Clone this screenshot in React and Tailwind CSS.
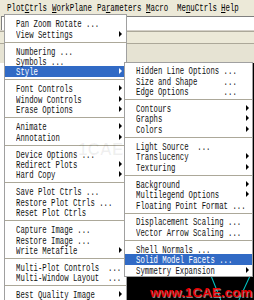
import React from 'react';

const mono = "font-['Liberation_Mono',monospace]";

const mainItems = [
    { label: 'Pan Zoom Rotate ...' },
    { label: 'View Settings', arrow: true },
    { sep: true },
    { label: 'Numbering ...' },
    { label: 'Symbols ...' },
    { label: 'Style', arrow: true, active: true },
    { sep: true },
    { label: 'Font Controls', arrow: true },
    { label: 'Window Controls', arrow: true },
    { label: 'Erase Options', arrow: true },
    { sep: true },
    { label: 'Animate', arrow: true },
    { label: 'Annotation', arrow: true },
    { sep: true },
    { label: 'Device Options ...' },
    { label: 'Redirect Plots', arrow: true },
    { label: 'Hard Copy', arrow: true },
    { sep: true },
    { label: 'Save Plot Ctrls ...' },
    { label: 'Restore Plot Ctrls ...' },
    { label: 'Reset Plot Ctrls' },
    { sep: true },
    { label: 'Capture Image ...' },
    { label: 'Restore Image ...' },
    { label: 'Write Metafile', arrow: true },
    { sep: true },
    { label: 'Multi-Plot Controls  ...' },
    { label: 'Multi-Window Layout  ...' },
    { sep: true },
    { label: 'Best Quality Image', arrow: true },
];

const styleItems = [
    { label: 'Hidden Line Options ...' },
    { label: 'Size and Shape      ...' },
    { label: 'Edge Options        ...' },
    { sep: true },
    { label: 'Contours', arrow: true },
    { label: 'Graphs', arrow: true },
    { label: 'Colors', arrow: true },
    { sep: true },
    { label: 'Light Source  ...' },
    { label: 'Translucency', arrow: true },
    { label: 'Texturing', arrow: true },
    { sep: true },
    { label: 'Background', arrow: true },
    { label: 'Multilegend Options', arrow: true },
    { label: 'Floating Point Format ...' },
    { sep: true },
    { label: 'Displacement Scaling ...' },
    { label: 'Vector Arrow Scaling ...' },
    { sep: true },
    { label: 'Shell Normals ...' },
    { label: 'Solid Model Facets ...', active: true },
    { label: 'Symmetry Expansion', arrow: true },
];

const MenuRows = ({ items, sub }) =>
    items.map((it, i) => {
        if (it.sep) {
            return (
                <div key={i} className="flex h-[6.5px] items-center">
                    <div className="h-px w-full bg-[#aca899]" />
                </div>
            );
        }
        return (
            <div
                key={i}
                className={`flex h-[10.45px] items-center pl-[11px] ${sub ? 'pr-[3px]' : 'pr-[4px]'} ${it.active ? 'bg-[#316ac5] text-white' : 'text-[#111]'}`}
            >
                <div className="min-w-0 flex-1">
                    <span className="inline-block origin-left scale-x-[0.73] whitespace-pre text-[10px] leading-none">
                        {it.label}
                    </span>
                </div>
                {it.arrow && (
                    <span
                        className={`h-0 w-0 border-y-[3px] border-l-[3px] border-y-transparent ${it.active ? 'border-l-white' : 'border-l-black'}`}
                    />
                )}
            </div>
        );
    });

const MenuBarItem = ({ w, children }) => (
    <div className={`${w} shrink-0`}>
        <span className="inline-block origin-left scale-x-[0.74] whitespace-pre text-[10px] leading-none">
            {children}
        </span>
    </div>
);

export default function App() {
    return (
        <div className={`relative h-[300px] w-[254px] overflow-hidden bg-[#ece9d8] text-black ${mono}`}>
            {/* menu bar */}
            <div className="flex h-[14px] items-center pl-[7px]">
                <MenuBarItem w="w-[45px]">Plot<u>C</u>trls</MenuBarItem>
                <MenuBarItem w="w-[45px]"><u>W</u>orkPlane</MenuBarItem>
                <MenuBarItem w="w-[49.4px]">Pa<u>r</u>ameters</MenuBarItem>
                <MenuBarItem w="w-[30.6px]"><u>M</u>acro</MenuBarItem>
                <MenuBarItem w="w-[44.4px]">Me<u>n</u>uCtrls</MenuBarItem>
                <MenuBarItem w="w-[30px]"><u>H</u>elp</MenuBarItem>
            </div>

            {/* toolbar area */}
            <div className="flex h-[49px] flex-col">
                <div className="h-[2px]" />
                <div className="ml-px h-[14px] border-t border-l border-[#7f7f7f] bg-white" />
                <div className="h-px bg-[#d4d0c8]" />
                <div className="h-px bg-[#aca899]" />
                <div className="h-[11px]" />
                <div className="h-px bg-[#aca899]" />
                <div className="flex-1 bg-[#e6e3d3]" />
            </div>

            {/* lower area: side panel + graphics window */}
            <div className="flex h-[237px]">
                <div className="w-[100px] border-r border-[#aca899] bg-white" />
                <div className="relative flex-1 bg-black">
                    <svg className="absolute inset-0 h-full w-full" viewBox="0 0 153 237" preserveAspectRatio="none">
                        <line x1="110" y1="212" x2="120" y2="237" stroke="#00c8c8" strokeWidth="1" />
                        <line x1="149" y1="213" x2="138" y2="237" stroke="#00c8c8" strokeWidth="1" />
                    </svg>
                </div>
            </div>

            {/* PlotCtrls dropdown */}
            <div className="absolute left-[4px] top-[14px] w-[123px] border border-[#a0a0a0] bg-white pt-[3px] pb-[3px]">
                <MenuRows items={mainItems} />
            </div>

            {/* Style submenu */}
            <div className="absolute left-[124px] top-[62px] w-[129px] border border-[#a0a0a0] bg-white pt-[2px] pb-[1px]">
                <MenuRows items={styleItems} sub />
            </div>

            {/* watermarks */}
            <span className="pointer-events-none absolute left-[78px] top-[141px] font-['Liberation_Sans',sans-serif] text-[17px] font-bold leading-none text-black/[0.06]">
                1CAE
            </span>
            <span className="pointer-events-none absolute left-[150px] top-[286px] font-['Liberation_Sans',sans-serif] text-[13.5px] font-bold leading-none text-[#e60000] [text-shadow:1px_1px_0_#ffffff80]">
                www.1CAE.com
            </span>
        </div>
    );
}
